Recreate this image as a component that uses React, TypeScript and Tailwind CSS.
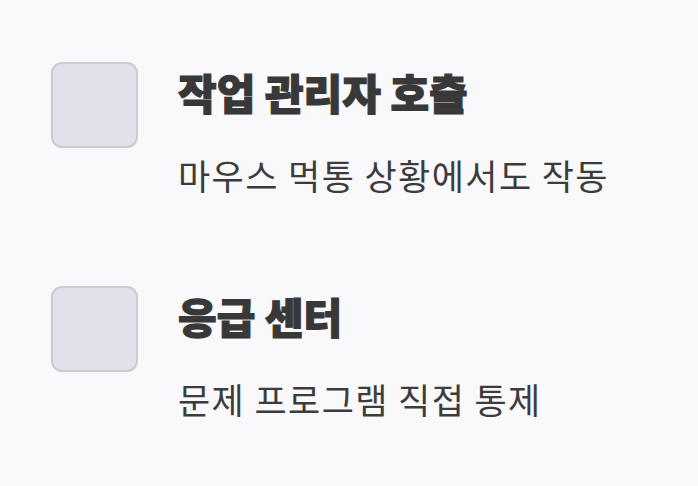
const items = [
  { title: "작업 관리자 호출", desc: "마우스 먹통 상황에서도 작동" },
  { title: "응급 센터", desc: "문제 프로그램 직접 통제" },
];

export default function App() {
  return (
    <div
      className="min-h-screen bg-[#f9f9fb] pl-[51px] pt-[62px]"
      style={{ fontFamily: '"Noto Sans CJK KR", "Noto Sans", sans-serif' }}
    >
      <div className="flex flex-col gap-[91px]">
        {items.map((it) => (
          <div key={it.title} className="flex items-start gap-[40px]">
            <div className="h-[86px] w-[87px] shrink-0 rounded-[11px] border-2 border-[#cbcbd3] bg-[#e1e1ea]" />
            <div className="mt-[6px] flex flex-col">
              <h3 className="text-[42px] leading-[48px] font-black text-[#383838] [-webkit-text-stroke:1.2px_#383838]">
                {it.title}
              </h3>
              <p className="mt-[39px] text-[35px] leading-[40px] tracking-[1.4px] text-[#3c3c3c]">{it.desc}</p>
            </div>
          </div>
        ))}
      </div>
    </div>
  );
}
